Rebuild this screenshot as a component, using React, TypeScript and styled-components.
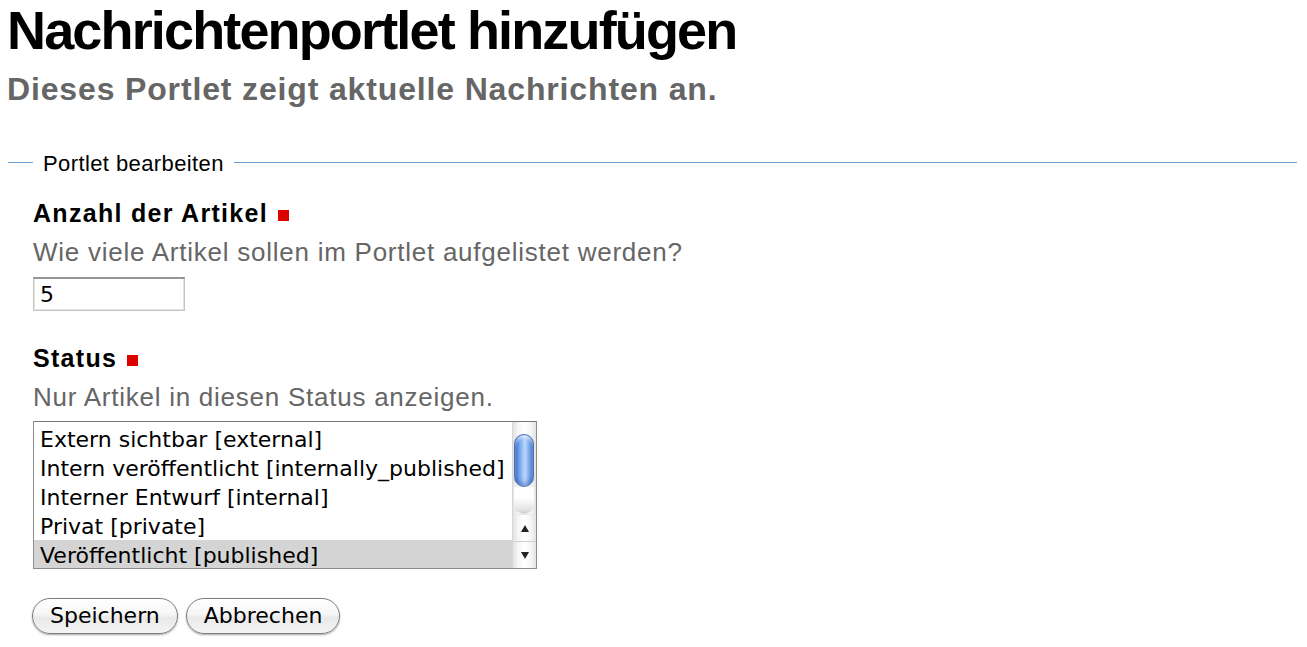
import React from "react";
import styled, { createGlobalStyle } from "styled-components";

const GlobalStyle = createGlobalStyle`
  html, body { margin: 0; padding: 0; background: #ffffff; }
  body { font-family: "Liberation Sans", Arial, Helvetica, sans-serif; color: #000; }
  * { box-sizing: border-box; }
`;

const Page = styled.div`
  padding: 0 10px 40px 8px;
`;

const Title = styled.h1`
  margin: 3px 0 0 -1px;
  font-family: "Liberation Sans", Arial, sans-serif;
  font-weight: 700;
  font-size: 54px;
  line-height: 54px;
  letter-spacing: -1.85px;
  color: #000;
`;

const Description = styled.p`
  margin: 16px 0 0 -1px;
  font-weight: 700;
  font-size: 32px;
  line-height: 32px;
  letter-spacing: 0.85px;
  color: #666;
`;

const Fieldset = styled.fieldset`
  margin: 45px 0 0 0;
  padding: 26px 0 0 25px;
  border: none;
  border-top: 1px solid #6b9fd6;
  min-width: 0;
`;

const Legend = styled.legend`
  padding: 3px 10px 0;
  font-size: 22px;
  line-height: 22px;
  letter-spacing: 0.4px;
  color: #000;
`;

const Field = styled.div<{ $gap?: number }>`
  margin-top: ${(p) => p.$gap ?? 0}px;
`;

const Label = styled.div`
  font-weight: 700;
  font-size: 25px;
  line-height: 25px;
  letter-spacing: 1.3px;
  color: #000;
`;

const Required = styled.span`
  display: inline-block;
  width: 11px;
  height: 11px;
  margin-left: 10px;
  margin-bottom: 1px;
  background: #dd0000;
`;

const Help = styled.div<{ $after: number }>`
  margin-top: 13px;
  margin-bottom: ${(p) => p.$after}px;
  font-size: 26px;
  line-height: 26px;
  letter-spacing: 0.75px;
  color: #666;
`;

const TextInput = styled.input`
  display: block;
  width: 152px;
  height: 34px;
  margin: 0;
  padding: 0 6px;
  font-family: "DejaVu Sans", Verdana, sans-serif;
  font-size: 22px;
  color: #000;
  background: #fff;
  border: 1px solid #c4c4c4;
  border-top: 2px solid #959595;
  box-shadow: inset 1px 0 0 #e4e4e4, inset -1px 0 0 #e4e4e4, inset 0 -1px 0 #e4e4e4;
  outline: none;
`;

const ListBox = styled.div`
  display: flex;
  width: 504px;
  height: 148px;
  border: 1px solid #8c8c8c;
  border-top-color: #7a7a7a;
  background: #fff;
  overflow: hidden;
`;

const OptionList = styled.div`
  flex: 1;
  padding-top: 2px;
  overflow: hidden;
`;

const OptionRow = styled.div<{ $selected?: boolean }>`
  height: 29px;
  padding: 2px 6px 0;
  font-family: "DejaVu Sans", Verdana, sans-serif;
  font-size: 22px;
  line-height: 27px;
  white-space: nowrap;
  color: #000;
  background: ${(p) => (p.$selected ? "#d4d4d4" : "transparent")};
`;

const ScrollBar = styled.div`
  width: 24px;
  display: flex;
  flex-direction: column;
  border-left: 1px solid #d6d6d6;
  background: linear-gradient(to right, #e2e2e2, #f7f7f7 25%, #ffffff 50%, #f7f7f7 75%, #e2e2e2);
`;

const TrackTop = styled.div`
  height: 12px;
`;

const Thumb = styled.div`
  height: 53px;
  margin: 0 2px 0 1px;
  border-radius: 10px;
  border: 1px solid #4a72b4;
  background: linear-gradient(
    to right,
    #3a69c0,
    #6f9fec 22%,
    #a2c8fa 45%,
    #bcd8f9 55%,
    #7eaced 78%,
    #4373c6
  );
  box-shadow: inset 0 3px 3px rgba(255, 255, 255, 0.55), inset 0 -3px 4px rgba(30, 60, 140, 0.35);
`;

const TrackRest = styled.div`
  flex: 1;
  margin: 0 2px 0 1px;
  border-radius: 0 0 10px 10px;
  background: linear-gradient(to bottom, #ffffff 40%, #e6e6e6 80%, #cfcfcf);
`;

const ArrowButton = styled.div<{ $dir: "up" | "down" }>`
  height: 27px;
  display: flex;
  align-items: center;
  justify-content: center;
  border-top: 1px solid ${(p) => (p.$dir === "up" ? "#e6e6e6" : "#d0d0d0")};
  &::before {
    content: "";
    width: 0;
    height: 0;
    border-left: 4px solid transparent;
    border-right: 4px solid transparent;
    ${(p) =>
      p.$dir === "up"
        ? "border-bottom: 7px solid #222;"
        : "border-top: 7px solid #222;"}
  }
`;

const ButtonRow = styled.div`
  display: flex;
  gap: 8px;
  margin-top: 29px;
  margin-left: -1px;
`;

const Button = styled.button`
  height: 36px;
  padding: 0 17px;
  font-family: "DejaVu Sans", Verdana, sans-serif;
  font-size: 22px;
  line-height: 34px;
  color: #000;
  border: 1px solid #7d7d7d;
  border-radius: 18px;
  background: linear-gradient(to bottom, #ffffff 0%, #f6f6f6 45%, #e9e9e9 55%, #f4f4f4 100%);
  box-shadow: 0 1px 2px rgba(0, 0, 0, 0.35), inset 0 1px 0 #ffffff;
  cursor: pointer;
`;

const options = [
  "Extern sichtbar [external]",
  "Intern veröffentlicht [internally_published]",
  "Interner Entwurf [internal]",
  "Privat [private]",
  "Veröffentlicht [published]",
];

export default function App() {
  return (
    <>
      <GlobalStyle />
      <Page>
        <Title>Nachrichtenportlet hinzufügen</Title>
        <Description>Dieses Portlet zeigt aktuelle Nachrichten an.</Description>
        <Fieldset>
          <Legend>Portlet bearbeiten</Legend>
          <Field>
            <Label>
              Anzahl der Artikel<Required />
            </Label>
            <Help $after={12}>Wie viele Artikel sollen im Portlet aufgelistet werden?</Help>
            <TextInput defaultValue="5" />
          </Field>
          <Field $gap={35}>
            <Label>
              Status<Required />
            </Label>
            <Help $after={11}>Nur Artikel in diesen Status anzeigen.</Help>
            <ListBox role="listbox" aria-multiselectable="true">
              <OptionList>
                {options.map((o, i) => (
                  <OptionRow key={o} role="option" $selected={i === 4} aria-selected={i === 4}>
                    {o}
                  </OptionRow>
                ))}
              </OptionList>
              <ScrollBar>
                <TrackTop />
                <Thumb />
                <TrackRest />
                <ArrowButton $dir="up" />
                <ArrowButton $dir="down" />
              </ScrollBar>
            </ListBox>
          </Field>
          <ButtonRow>
            <Button type="button">Speichern</Button>
            <Button type="button">Abbrechen</Button>
          </ButtonRow>
        </Fieldset>
      </Page>
    </>
  );
}
